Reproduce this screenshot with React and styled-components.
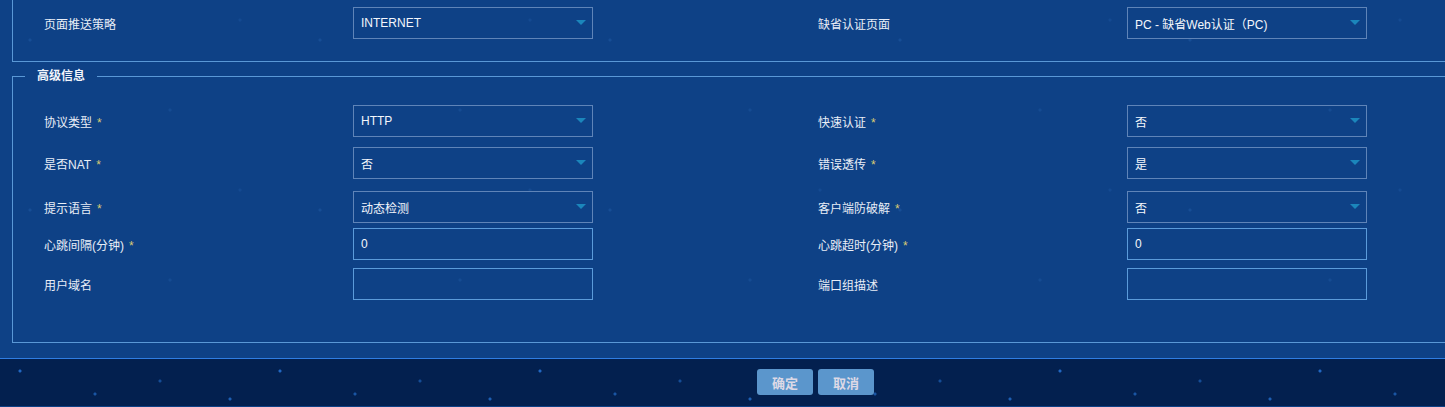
import React from "react";
import styled, { createGlobalStyle } from "styled-components";

const GlobalStyle = createGlobalStyle`
  html, body {
    margin: 0;
    padding: 0;
    overflow: hidden;
    background: #0e4186;
  }
  body {
    font-family: "Liberation Sans", "Noto Sans CJK SC", sans-serif;
    font-size: 12px;
    color: #e9eef7;
  }
`;

const topRows = [
    [
        {label: "页面推送策略", type: "select", value: "INTERNET"},
        {label: "缺省认证页面", type: "select", value: "PC - 缺省Web认证（PC)"},
    ],
];

const advRows = [
    {top: 0, items: [
        {label: "协议类型", req: true, type: "select", value: "HTTP"},
        {label: "快速认证", req: true, type: "select", value: "否"},
    ]},
    {top: 10, items: [
        {label: "是否NAT", req: true, type: "select", value: "否"},
        {label: "错误透传", req: true, type: "select", value: "是"},
    ]},
    {top: 12, items: [
        {label: "提示语言", req: true, type: "select", value: "动态检测"},
        {label: "客户端防破解", req: true, type: "select", value: "否"},
    ]},
    {top: 5, items: [
        {label: "心跳间隔(分钟)", req: true, type: "input", value: "0"},
        {label: "心跳超时(分钟)", req: true, type: "input", value: "0"},
    ]},
    {top: 8, items: [
        {label: "用户域名", type: "input", value: ""},
        {label: "端口组描述", type: "input", value: ""},
    ]},
];

const Field = ({item}) => (
    <>
        <Label>
            {item.label}
            {item.req && <Star>*</Star>}
        </Label>
        {item.type === "select" ? (
            <SelectBox>
                <span>{item.value}</span>
                <Caret />
            </SelectBox>
        ) : (
            <InputBox type="text" defaultValue={item.value} />
        )}
    </>
);

const FormLine = ({items, top}) => (
    <Row $top={top}>
        <Field item={items[0]} />
        <span />
        <Field item={items[1]} />
    </Row>
);

const App = () => {
    return (
        <>
            <GlobalStyle />
            <Page>
                <Main>
                    <TopSet>
                        {topRows.map((items, i) => (
                            <FormLine key={i} items={items} top={0} />
                        ))}
                    </TopSet>
                    <AdvSet>
                        <Legend>高级信息</Legend>
                        {advRows.map((r, i) => (
                            <FormLine key={i} items={r.items} top={r.top} />
                        ))}
                    </AdvSet>
                </Main>
                <Footer>
                    <Btn>确定</Btn>
                    <Btn>取消</Btn>
                </Footer>
            </Page>
        </>
    );
};

const Page = styled.div`
  width: 100%;
`;

const Main = styled.div`
  padding-bottom: 15px;
  background-color: #0e4186;
  background-image:
    radial-gradient(circle at 30px 40px, rgba(50, 115, 195, 0.25) 0 1px, transparent 2px),
    radial-gradient(circle at 170px 110px, rgba(50, 115, 195, 0.2) 0 1px, transparent 2px),
    radial-gradient(circle at 240px 20px, rgba(50, 115, 195, 0.18) 0 1px, transparent 2px);
  background-size: 290px 170px;
`;

const TopSet = styled.div`
  margin-left: 12px;
  padding: 7px 0 22px;
  border: 1px solid #5a98d6;
  border-top: none;
  border-right: none;
`;

const AdvSet = styled.fieldset`
  margin: 6px 0 0 12px;
  padding: 21px 0 42px;
  border: 1px solid #5a98d6;
  border-right: none;
  min-width: 0;
`;

const Legend = styled.legend`
  margin-left: 12px;
  padding: 0 12px;
  font-size: 12px;
  line-height: 16px;
  font-weight: bold;
  color: #f2f5fb;
`;

const Row = styled.div`
  display: grid;
  grid-template-columns: 309px 240px 225px 309px 240px;
  height: 32px;
  padding-left: 31px;
  align-items: center;
  margin-top: ${p => p.$top}px;
`;

const Label = styled.div`
  font-size: 12px;
  color: #e9eef7;
  white-space: nowrap;
`;

const Star = styled.span`
  margin-left: 5px;
  color: #d9cc74;
`;

const SelectBox = styled.div`
  height: 32px;
  box-sizing: border-box;
  border: 1px solid #5f84b8;
  padding: 0 7px;
  display: flex;
  align-items: center;
  justify-content: space-between;
  color: #f4f7fc;
  font-size: 12px;
`;

const Caret = styled.i`
  width: 0;
  height: 0;
  margin-top: -2px;
  border-left: 5px solid transparent;
  border-right: 5px solid transparent;
  border-top: 5px solid #1b86bb;
  margin-right: -1px;
`;

const InputBox = styled.input`
  height: 32px;
  box-sizing: border-box;
  border: 1px solid #5b9bda;
  background: transparent;
  padding: 0 7px;
  color: #f4f7fc;
  font-family: inherit;
  font-size: 12px;
  outline: none;
`;

const Footer = styled.div`
  height: 48px;
  box-sizing: border-box;
  border-top: 1px solid #2f7de2;
  padding: 10px 0 0 186px;
  display: flex;
  justify-content: center;
  align-items: flex-start;
  gap: 5px;
  background-color: #03204f;
  background-image:
    radial-gradient(circle at 20px 12px, rgba(40, 120, 220, 0.8) 0 1px, transparent 2px),
    radial-gradient(circle at 95px 35px, rgba(40, 120, 220, 0.6) 0 1px, transparent 2px),
    radial-gradient(circle at 160px 22px, rgba(40, 120, 220, 0.5) 0 1px, transparent 2px),
    radial-gradient(circle at 230px 40px, rgba(40, 120, 220, 0.7) 0 1px, transparent 2px);
  background-size: 260px 48px;
`;

const Btn = styled.button`
  width: 56px;
  height: 26px;
  border: none;
  border-radius: 3px;
  background: #5b96cc;
  color: #dcd9e6;
  font-family: "Liberation Sans", "Noto Sans CJK SC", sans-serif;
  font-size: 13px;
  font-weight: bold;
  padding: 0;
  cursor: pointer;
`;

export default App;
